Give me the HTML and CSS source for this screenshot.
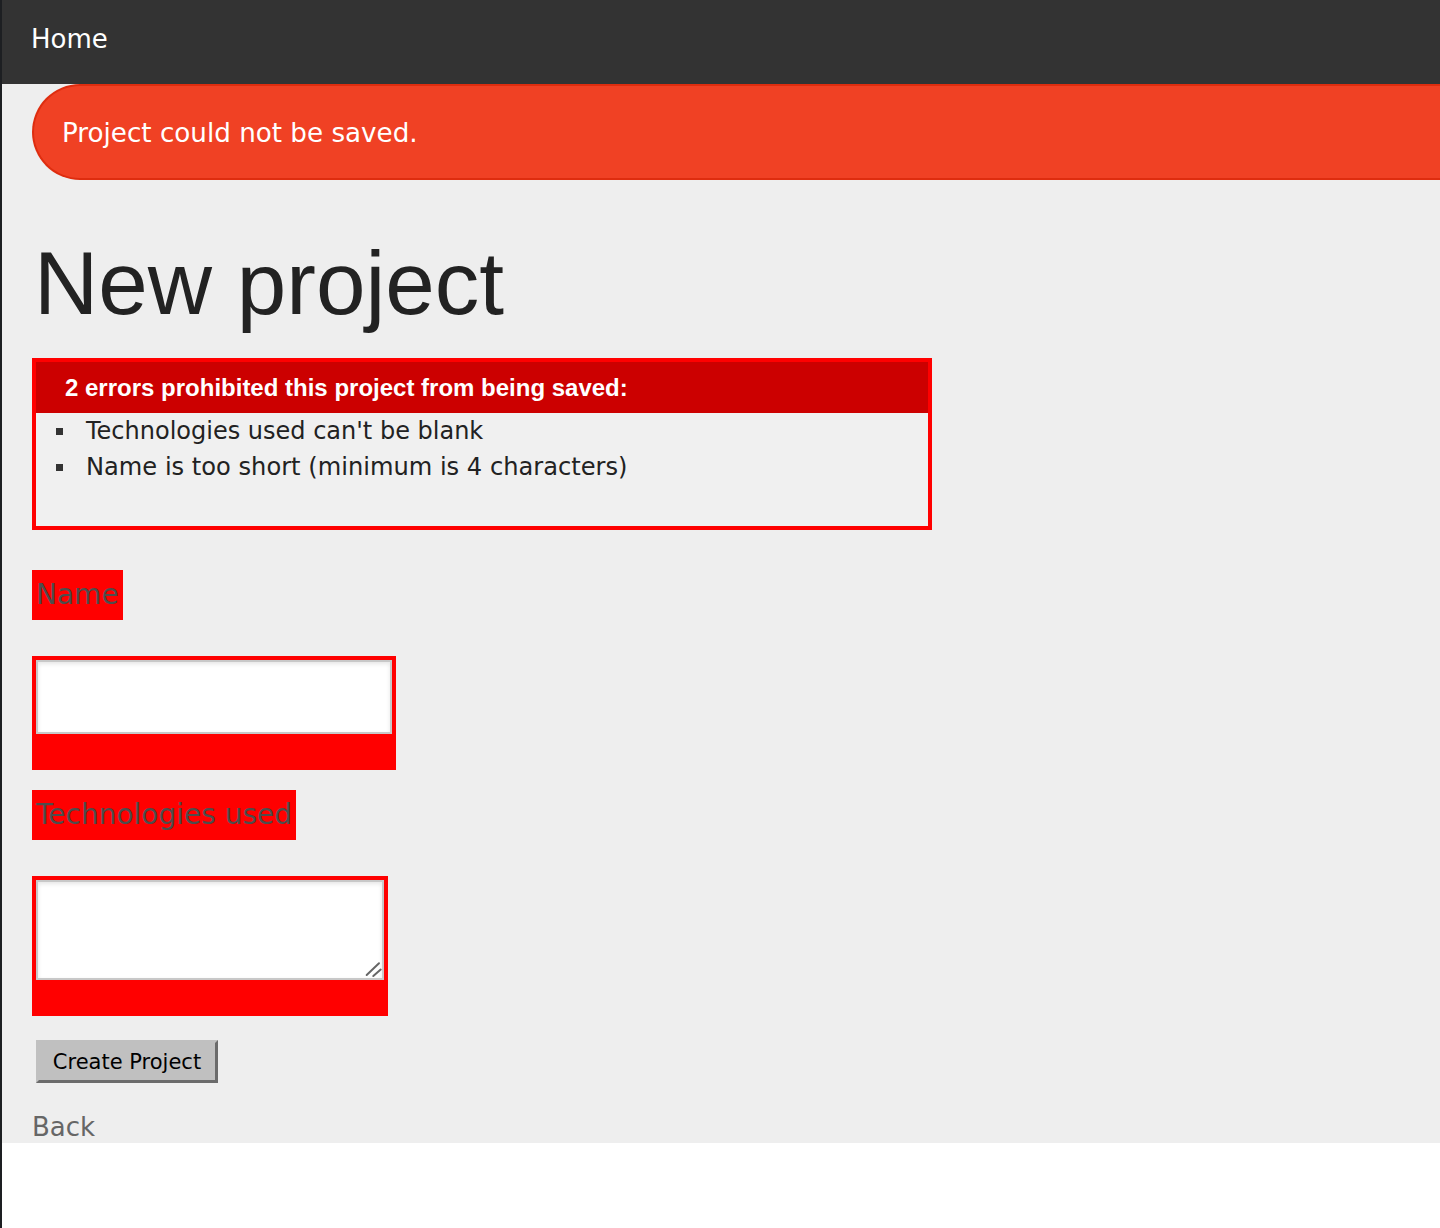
FILE: index.html
```html
<!DOCTYPE html>
<html lang="en">
<head>
<meta charset="utf-8">
<title>New project</title>
<link rel="stylesheet" href="styles.css">
</head>
<body>
<nav class="topbar"><a class="home" href="#">Home</a></nav>
<div class="flash">Project could not be saved.</div>
<main class="content">
  <h1 class="title">New project</h1>
  <div class="errors">
    <h2 class="errors-head">2 errors prohibited this project from being saved:</h2>
    <ul class="errors-list">
      <li>Technologies used can't be blank</li>
      <li>Name is too short (minimum is 4 characters)</li>
    </ul>
  </div>
  <form class="form">
    <div class="field">
      <div class="fwe"><label class="lbl" for="name">Name</label></div>
      <div class="fwe fwe-ctl"><input class="inp" id="name" type="text"></div>
    </div>
    <div class="field field-2">
      <div class="fwe"><label class="lbl" for="tech">Technologies used</label></div>
      <div class="fwe fwe-ctl fwe-ta">
        <textarea class="ta" id="tech"></textarea>
        <svg class="grip" width="22" height="22" viewBox="0 0 22 22" aria-hidden="true">
          <path d="M4.7 17 L17 5.3 M11.3 18 L18.7 11.6" stroke="#666" stroke-width="2" stroke-linecap="round" fill="none"/>
        </svg>
      </div>
    </div>
    <div class="actions"><button class="btn" type="button">Create Project</button></div>
  </form>
  <a class="back" href="#">Back</a>
</main>
</body>
</html>
```
FILE: styles.css
```css
html {
  background: #fff;
  border-left: 2px solid #1d1f22;
  min-height: 100vh;
  box-sizing: border-box;
}
body {
  margin: 0;
  background: #eee;
  font-family: "DejaVu Sans", Verdana, sans-serif;
  color: #222;
}
.topbar {
  height: 84px;
  background: #333;
  padding-left: 29px;
}
.home {
  display: block;
  line-height: 78px;
  font-size: 26px;
  color: #fff;
  text-decoration: none;
}
.flash {
  margin-left: 30px;
  height: 96px;
  box-sizing: border-box;
  border: 2px solid #de2d0f;
  border-right: none;
  border-radius: 48px 0 0 48px;
  background: #f04124;
  color: #fff;
  font-size: 26.2px;
  line-height: 94px;
  padding-left: 28px;
}
.content {
  padding: 0 30px 0 30px;
}
.title {
  margin: 59px 0 30px 2px;
  font-family: "Liberation Sans", Arial, sans-serif;
  font-weight: normal;
  font-size: 89px;
  line-height: 89px;
  color: #222;
}
.errors {
  width: 900px;
  box-sizing: border-box;
  border: 4px solid #f00;
  background: #f0f0f0;
  padding: 14px 14px 0;
  margin-bottom: 40px;
}
.errors-head {
  margin: -14px -14px 0;
  padding: 10px 10px 10px 29px;
  background: #c00;
  color: #fff;
  font-family: "Liberation Sans", Arial, sans-serif;
  font-weight: bold;
  font-size: 24px;
  line-height: 31px;
}
.errors-list {
  list-style: none;
  margin: 0 0 41px;
  padding: 0;
}
.errors-list li {
  display: flex;
  align-items: center;
  font-size: 24px;
  line-height: 36px;
  color: #222;
}
.errors-list li::before {
  content: "";
  flex: none;
  width: 7px;
  height: 7px;
  background: #333;
  margin: 0 23px 0 6px;
}
.errors-list li + li {
  font-size: 24.15px;
}
.form {
  margin: 0;
}
.field-2 {
  margin-top: 20px;
}
.fwe {
  width: fit-content;
  padding: 4px;
  background: #f00;
}
.fwe-ctl {
  margin-top: 36px;
}
.fwe-ta {
  position: relative;
}
.grip {
  position: absolute;
  left: 330px;
  top: 82px;
}
.lbl {
  display: block;
  font-size: 28px;
  line-height: 42px;
  color: #4d4d4d;
}
.inp,
.ta {
  display: block;
  box-sizing: border-box;
  margin: 0 0 32px;
  border: 2px solid #c8c8c8;
  background: #fff;
  box-shadow: inset 0 2px 4px rgba(0, 0, 0, 0.1);
  font-family: "DejaVu Sans", sans-serif;
  outline: none;
}
.inp {
  width: 356px;
  height: 74px;
}
.ta {
  width: 348px;
  height: 100px;
  resize: none;
}
.actions {
  margin-top: 24px;
  padding-left: 4px;
}
.btn {
  display: block;
  width: 182px;
  height: 43px;
  box-sizing: border-box;
  padding: 0;
  background: #c0c0c0;
  border: 3px solid;
  border-color: #c0c0c0 #6b6b6b #6b6b6b #c0c0c0;
  font-family: "DejaVu Sans", sans-serif;
  font-size: 21px;
  color: #000;
  text-align: center;
}
.back {
  display: block;
  width: fit-content;
  margin-top: 28px;
  font-size: 26px;
  line-height: 32px;
  color: #666;
  text-decoration: none;
}
```
